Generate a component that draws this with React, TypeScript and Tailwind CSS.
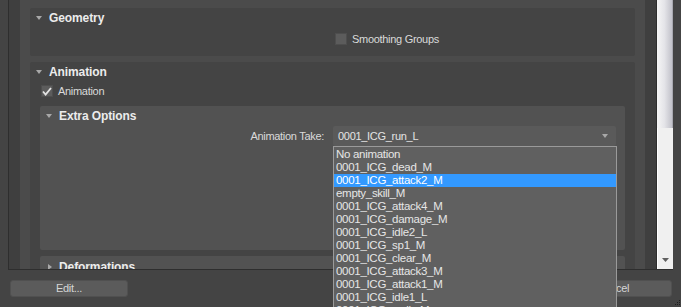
import React from 'react';

const takes = [
  'No animation',
  '0001_ICG_dead_M',
  '0001_ICG_attack2_M',
  'empty_skill_M',
  '0001_ICG_attack4_M',
  '0001_ICG_damage_M',
  '0001_ICG_idle2_L',
  '0001_ICG_sp1_M',
  '0001_ICG_clear_M',
  '0001_ICG_attack3_M',
  '0001_ICG_attack1_M',
  '0001_ICG_idle1_L',
  '0001_ICG_walk_M',
];

const Arrow: React.FC<{ open?: boolean }> = ({ open = true }) =>
  open ? (
    <svg width="6" height="4" viewBox="0 0 6 4" className="shrink-0">
      <path d="M0 0h6L3 4z" fill="#a8a8a8" />
    </svg>
  ) : (
    <svg width="4" height="6" viewBox="0 0 4 6" className="shrink-0">
      <path d="M0 0v6l4-3z" fill="#a8a8a8" />
    </svg>
  );

const Check: React.FC<{ checked?: boolean }> = ({ checked }) => (
  <div className="w-[12px] h-[12px] bg-[#5c5c5c] border border-[#4e4e4e] flex items-center justify-center shrink-0">
    {checked && (
      <svg width="10" height="9" viewBox="0 0 10 9">
        <path d="M1 4.5l2.6 3L9 1" stroke="#e4e4e4" strokeWidth="1.8" fill="none" />
      </svg>
    )}
  </div>
);

const Header: React.FC<{ title: string; open?: boolean }> = ({ title, open = true }) => (
  <div className="h-[19px] flex items-center gap-[7px] pl-[6px]">
    <div className="w-[6px] flex justify-center">
      <Arrow open={open} />
    </div>
    <span className="font-bold text-[12px] text-[#ececec] tracking-[-0.1px]">{title}</span>
  </div>
);

export default function App() {
  return (
    <div className="w-[681px] h-[307px] bg-[#444444] overflow-hidden relative font-['Liberation_Sans',Arial,sans-serif] text-[11px] text-[#dadada] tracking-[-0.3px]">
      <div className="flex h-[270px] pl-2">
        <div className="flex w-[665px] border-l border-b border-[#2e2e2e] bg-[#3f3f3f] pl-[11px]">
          <div className="w-[625px] bg-[#4b4b4b] px-[10px] pt-2 flex flex-col gap-[6px] overflow-hidden">
            {/* Geometry */}
            <div className="h-[48px] shrink-0 bg-[#444444] rounded-[2px]">
              <Header title="Geometry" />
              <div className="flex items-center gap-[5px] pl-[305px] mt-[4px]">
                <Check />
                <span>Smoothing Groups</span>
              </div>
            </div>

            {/* Animation */}
            <div className="shrink-0 bg-[#444444] rounded-[2px] pb-4">
              <Header title="Animation" />
              <div className="flex items-center gap-[5px] pl-[11px] mt-[4px] h-[12px]">
                <Check checked />
                <span>Animation</span>
              </div>
              <div className="mx-[10px] mt-[9px] flex flex-col gap-[6px]">
                <div className="h-[144px] bg-[#525252] rounded-[2px]">
                  <div className="h-[20px] flex items-center gap-[7px] pl-[6px]">
                    <div className="w-[6px] flex justify-center">
                      <Arrow />
                    </div>
                    <span className="font-bold text-[12px] text-[#ececec] tracking-[-0.1px]">Extra Options</span>
                  </div>
                  <div className="flex items-center justify-end gap-[9px] pr-[9px]">
                    <span>Animation Take:</span>
                    <div className="w-[283px] h-[20px] bg-[#5a5a5a] rounded-[2px] flex items-center justify-between pl-[5px] pr-[8px]">
                      <span className="text-[#e4e4e4]">0001_ICG_run_L</span>
                      <Arrow />
                    </div>
                  </div>
                </div>
                <div className="h-[30px] bg-[#525252] rounded-[2px]">
                  <div className="h-[20px] flex items-center gap-[7px] pl-[7px] pt-[2px]">
                    <div className="w-[5px] flex justify-center">
                      <Arrow open={false} />
                    </div>
                    <span className="font-bold text-[12px] text-[#ececec] tracking-[-0.1px]">Deformations</span>
                  </div>
                </div>
              </div>
            </div>
          </div>
          <div className="w-[11px]" />
          <div className="w-[17px] border-l border-[#2e2e2e] flex flex-col">
            <div className="h-[128px] bg-gradient-to-r from-[#f6f6f6] via-[#e4e4e8] to-[#c2c2ca] border-r border-[#a8a8b0]" />
            <div className="flex-1 bg-[#f0f0f0] border-l border-white flex items-end justify-center pb-[7px]">
              <svg width="7" height="4" viewBox="0 0 7 4">
                <path d="M0 0h7L3.5 4z" fill="#606060" />
              </svg>
            </div>
          </div>
        </div>
      </div>

      <div className="flex justify-between px-[10px] pt-[10px] pr-[9px]">
        <div className="w-[118px] h-[17px] bg-[#5b5b5b] rounded-[3px] border border-[#505050] flex items-center justify-center text-[#d6d6d6]">
          Edit...
        </div>
        <div className="w-[118px] h-[17px] bg-[#5b5b5b] rounded-[3px] border border-[#505050] flex items-center justify-center text-[#d6d6d6]">
          Cancel
        </div>
      </div>

      <svg width="6" height="7" viewBox="0 0 6 7" className="absolute right-0 bottom-0">
        <rect x="4" y="0" width="1" height="1" fill="#1e1e1e" />
        <rect x="2" y="2" width="1" height="1" fill="#1e1e1e" />
        <rect x="4" y="2" width="1" height="1" fill="#1e1e1e" />
        <rect x="0" y="4" width="1" height="1" fill="#1e1e1e" />
        <rect x="2" y="4" width="1" height="1" fill="#1e1e1e" />
        <rect x="4" y="4" width="1" height="1" fill="#1e1e1e" />
      </svg>

      {/* open dropdown list */}
      <div className="absolute left-[333px] top-[146px] w-[284px] h-[180px] bg-[#606060] border border-[#9a9a9a] pt-[1px]">
        {takes.map((t, i) => (
          <div
            key={t}
            className={`h-[13px] leading-[13px] pl-[2px] text-[11.5px] ${
              i === 2 ? 'bg-[#3399ff] text-white' : 'text-[#e6e6e6]'
            }`}
          >
            {t}
          </div>
        ))}
      </div>
    </div>
  );
}
